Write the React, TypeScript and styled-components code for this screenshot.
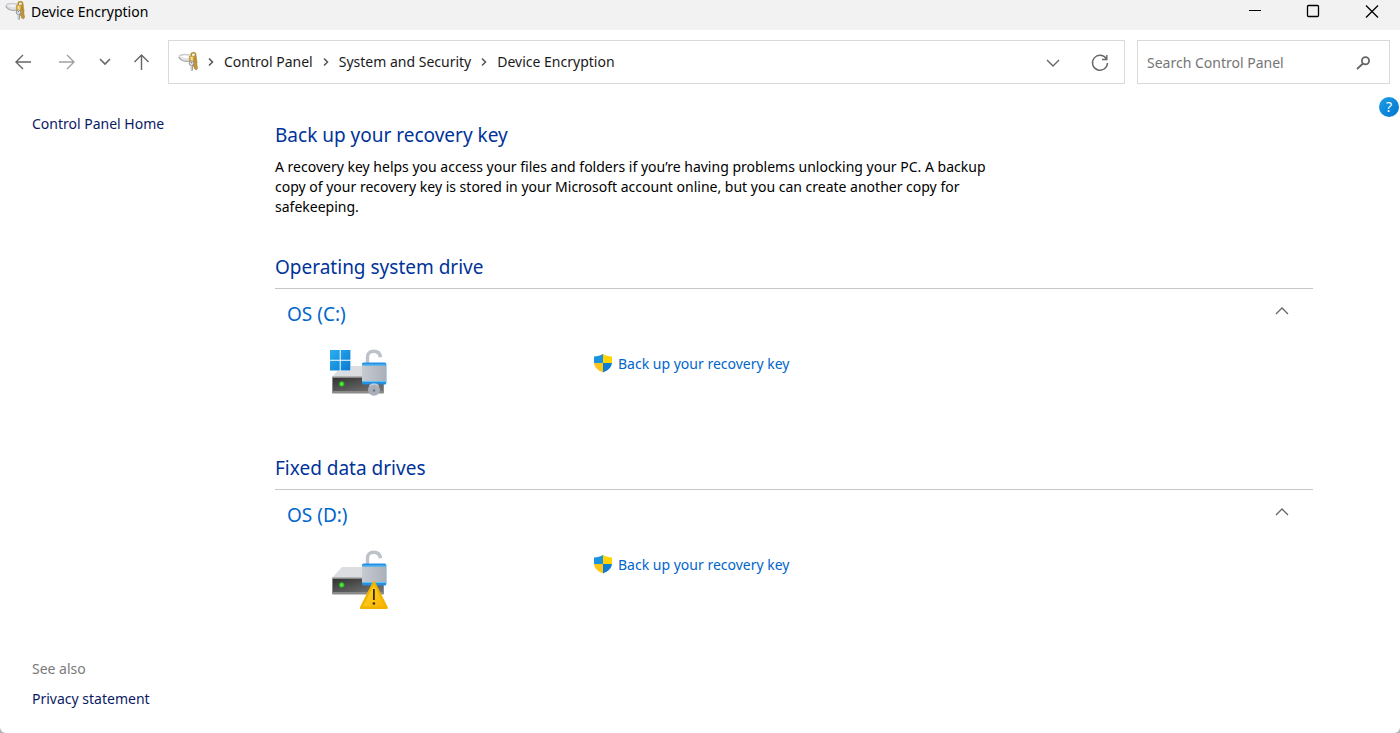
import React, { useState } from 'react';
import styled, { createGlobalStyle } from 'styled-components';

const GlobalStyle = createGlobalStyle`
  *, *::before, *::after { box-sizing: border-box; }
  body {
    margin: 0;
    background: #b4b4b4;
    font-family: 'Noto Sans', 'Open Sans', sans-serif;
    font-size: 14px;
    line-height: 20px;
    color: #000;
  }
  button { font: inherit; }
  a { text-decoration: none; }
  a:hover { text-decoration: underline; }
`;

const Window = styled.div`
  display: flex;
  flex-direction: column;
  min-height: 100vh;
  background: #fff;
  border-radius: 0 0 6px 6px;
`;

const TitleBar = styled.header`
  display: flex;
  align-items: flex-start;
  height: 30px;
  padding-left: 5px;
  background: #f2f2f2;
`;

const Title = styled.h1`
  flex: 1;
  margin: 0;
  padding: 2px 0 0 6px;
  font-size: 14px;
  font-weight: 400;
`;

const CaptionButton = styled.button`
  display: flex;
  align-items: center;
  justify-content: center;
  width: 58px;
  height: 22px;
  padding: 0;
  border: 0;
  background: none;
  color: #000;
`;

const NavBar = styled.nav`
  display: flex;
  align-items: center;
  gap: 12px;
  padding: 10px 10px 0 9px;
`;

const NavButtons = styled.div`
  display: flex;
  align-items: center;
  gap: 16px;
`;

const IconButton = styled.button<{ $width?: number; $muted?: boolean }>`
  display: flex;
  align-items: center;
  justify-content: center;
  flex: none;
  width: ${(p) => p.$width ?? 20}px;
  height: 20px;
  padding: 0;
  border: 0;
  background: none;
  color: ${(p) => (p.$muted ? '#a0a0a0' : '#666')};
`;

const AddressBar = styled.div`
  display: flex;
  align-items: center;
  flex: 1;
  height: 44px;
  margin-left: 3px;
  padding: 0 14px 0 9px;
  border: 1px solid #d9d9d9;
`;

const Crumbs = styled.ol`
  display: flex;
  align-items: center;
  flex: 1;
  margin: 0;
  padding: 0;
  list-style: none;
`;

const Crumb = styled.li`
  display: flex;
  align-items: center;
`;

const CrumbLink = styled.a`
  color: #1a1a1a;
`;

const CrumbArrow = styled.span`
  display: flex;
  justify-content: center;
  width: 26px;
  color: #555;
`;

const AddressActions = styled.div`
  display: flex;
  gap: 27px;
`;

const SearchBox = styled.form`
  display: flex;
  align-items: center;
  width: 253px;
  height: 44px;
  padding: 1px 16px 0 9px;
  border: 1px solid #d9d9d9;
`;

const SearchInput = styled.input`
  flex: 1;
  min-width: 0;
  padding: 0;
  border: 0;
  outline: 0;
  font: inherit;
  &::placeholder { color: #757575; opacity: 1; }
`;

const Body = styled.div`
  position: relative;
  display: flex;
  flex: 1;
`;

const Sidebar = styled.aside`
  display: flex;
  flex-direction: column;
  justify-content: space-between;
  flex: none;
  width: 275px;
  padding: 30px 32px 24px;
`;

const SideLink = styled.a`
  color: #0a1a66;
`;

const SeeAlso = styled.div`
  display: flex;
  flex-direction: column;
  gap: 10px;
`;

const SeeAlsoLabel = styled.span`
  color: #7a7a7a;
`;

const Content = styled.main`
  flex: 1;
  padding: 37px 87px 24px 0;
`;

const Heading = styled.h2`
  margin: 0;
  font-size: 19px;
  line-height: 28px;
  font-weight: 400;
  color: #003399;
`;

const Intro = styled.p`
  max-width: 724px;
  margin: 8px 0 36px;
`;

const Section = styled.section`
  min-height: 201px;
`;

const SectionHeading = styled(Heading)`
  padding-bottom: 7px;
  border-bottom: 1px solid #c6c6c6;
`;

const DriveHeader = styled.div`
  display: flex;
  align-items: center;
  justify-content: space-between;
  padding: 11px 21px 0 12px;
`;

const DriveName = styled.h3`
  margin: 0;
  font-size: 19px;
  line-height: 28px;
  font-weight: 400;
  color: #0066cc;
`;

const DriveBody = styled.div`
  display: flex;
  align-items: flex-start;
  gap: 201px;
  padding: 20px 0 0 53px;
`;

const BackupLink = styled.a`
  display: flex;
  align-items: center;
  gap: 5px;
  padding-top: 6px;
  color: #0066cc;
`;

const HelpButton = styled.button`
  position: absolute;
  top: 13px;
  right: 1px;
  width: 20px;
  height: 20px;
  padding: 0;
  border: 0;
  border-radius: 50%;
  background: linear-gradient(135deg, #1f9fe6, #0073cf);
  color: #fff;
  font-size: 14px;
  line-height: 20px;
`;

type IconProps = { children: React.ReactNode; size?: number; stroke?: number };

const LineIcon = ({ children, size = 20, stroke = 1.4 }: IconProps) => (
  <svg width={size} height={size} viewBox={`0 0 ${size} ${size}`} fill="none" stroke="currentColor" strokeWidth={stroke} aria-hidden="true">
    {children}
  </svg>
);

const KeyIcon = () => (
  <svg width="20" height="22" viewBox="1 0 20 22" fill="none" aria-hidden="true">
    <path d="M1.800 5.500C3.500 3.600 8 3 13 4" stroke="#c9ccd1" strokeWidth="1.600" />
    <path d="M2 6C4 8 8 8.800 12 8.200" stroke="#dfe1e4" strokeWidth="2.600" />
    <path d="M1.800 6C3.500 9.600 8 11 12.500 10" stroke="#a2a5ab" strokeWidth="1.200" />
    <path d="M14.200 5V3.800c0-2.600 4.400-2.600 4.400 0V6" stroke="#b58b2a" strokeWidth="1.500" />
    <path d="M12.300 5.400l6.800-.6 1 7-7.600 1.200z" fill="#dcb24e" stroke="#a57e24" strokeWidth=".6" />
    <path d="M14.500 6l.8 4.500" stroke="#f8e3a0" strokeWidth="1.500" />
    <path d="M18 5.500l1.600 6.500 1 5.500-1.400 1.500-1.700-1.300-.5-2-1-.7V11z" fill="#c4963a" stroke="#96701f" strokeWidth=".5" />
    <circle cx="14.500" cy="12.300" r="2.300" fill="#dcdee1" stroke="#85888e" strokeWidth=".8" />
    <circle cx="14.500" cy="11.700" r=".6" fill="#777b82" />
    <path d="M14.800 14.500v5" stroke="#85888e" strokeWidth="2" />
    <path d="M14.500 14.500v4.600" stroke="#dcdee1" strokeWidth=".8" />
  </svg>
);

const ShieldIcon = () => (
  <svg width="20" height="20" viewBox="0 0 20 20" aria-hidden="true">
    <defs>
      <clipPath id="shield">
        <path d="M10 0c2.500 1.600 5.400 2.400 9 2.500v5.500c0 5-3.500 8.300-9 10.500C4.500 16.300 1 13 1 8V2.500C4.600 2.400 7.500 1.600 10 0z" />
      </clipPath>
    </defs>
    <g clipPath="url(#shield)">
      <rect width="10" height="9" fill="#1c93e0" />
      <rect x="10" width="10" height="9" fill="#ffd400" />
      <rect y="9" width="10" height="11" fill="#ffc61a" />
      <rect x="10" y="9" width="10" height="11" fill="#0f7dd2" />
    </g>
  </svg>
);

const DriveIcon = ({ system }: { system: boolean }) => {
  const id = system ? 'c' : 'd';
  return (
    <svg width="64" height="64" viewBox="0 0 64 64" fill="none" aria-hidden="true">
      <defs>
        <linearGradient id={`front-${id}`} x1="0" y1="0" x2="1" y2="1">
          <stop offset="0" stopColor="#333" />
          <stop offset="1" stopColor="#777" />
        </linearGradient>
        <linearGradient id={`body-${id}`} x1="0" y1="0" x2="1" y2="0">
          <stop offset="0" stopColor="#c6cad1" />
          <stop offset="1" stopColor="#aab0ba" />
        </linearGradient>
        <linearGradient id={`logo-${id}`} x1="0" y1="0" x2="1" y2="1">
          <stop offset="0" stopColor="#2cb0f0" />
          <stop offset="1" stopColor="#0a78d0" />
        </linearGradient>
        <linearGradient id={`warn-${id}`} x1="0" y1="0" x2="1" y2="1">
          <stop offset="0" stopColor="#ffdc2e" />
          <stop offset="1" stopColor="#fbb000" />
        </linearGradient>
      </defs>
      <path d="M14 18h32l10 11H4z" fill="#dcdde0" />
      <rect x="4" y="28.500" width="52" height="17" rx="1" fill="#8b8b8b" />
      <rect x="5" y="30" width="50" height="13" fill={`url(#front-${id})`} />
      <circle cx="13.700" cy="36" r="3" fill="#2f8a2a" />
      <circle cx="13.700" cy="36" r="2" fill="#4be838" />
      {system && (
        <>
          <rect x="1" y="1" width="22" height="22" fill="#fff" />
          <path d="M2 2h9.700v9.700H2zM12.700 2h9.700v9.700h-9.700zM2 12.700h9.700v9.700H2zM12.700 12.700h9.700v9.700h-9.700z" fill={`url(#logo-${id})`} />
        </>
      )}
      <path d="M39.500 15V9C39.500 5.500 42 3.200 45.700 3.200s6.300 2.300 6.800 6" stroke="#bcc1ca" strokeWidth="3.400" />
      <rect x="34" y="14.500" width="24.300" height="22" rx="1.500" fill="#2590e2" />
      <rect x="34" y="17.500" width="24.300" height="15.500" fill={`url(#body-${id})`} />
      <path d="M34 17h24.300M34 33.500h24.300" stroke="#5fc2f7" strokeWidth="1.200" />
      {system ? (
        <>
          <circle cx="46" cy="41.700" r="6" fill="#a9aeb8" />
          <path d="M41.500 38a6 6 0 0 1 9 0" stroke="#c5c9d0" strokeWidth="1.500" />
          <circle cx="46" cy="42.500" r="1.300" fill="#757b86" />
        </>
      ) : (
        <>
          <path d="M45.900 33.200L58.700 58.800H33z" fill={`url(#warn-${id})`} stroke="#f0b400" strokeWidth="2.400" strokeLinejoin="round" />
          <path d="M45.900 40v11" stroke="#3a2c00" strokeWidth="1.800" />
          <circle cx="45.900" cy="54.500" r="1.300" fill="#3a2c00" />
        </>
      )}
    </svg>
  );
};

const DriveSection = ({ heading, name, system = false }: { heading: string; name: string; system?: boolean }) => {
  const [open, setOpen] = useState(true);
  return (
    <Section>
      <SectionHeading>{heading}</SectionHeading>
      <DriveHeader>
        <DriveName>{name}</DriveName>
        <IconButton aria-label={`Toggle ${name}`} aria-expanded={open} onClick={() => setOpen(!open)}>
          <LineIcon stroke={1.3}>
            <path d={open ? 'M4 10l6-6 6 6' : 'M4 4l6 6 6-6'} />
          </LineIcon>
        </IconButton>
      </DriveHeader>
      {open && (
        <DriveBody>
          <DriveIcon system={system} />
          <BackupLink href="#backup">
            <ShieldIcon />
            Back up your recovery key
          </BackupLink>
        </DriveBody>
      )}
    </Section>
  );
};

const CRUMBS = ['Control Panel', 'System and Security', 'Device Encryption'];

export default function App() {
  return (
    <>
      <GlobalStyle />
      <Window>
        <TitleBar>
          <KeyIcon />
          <Title>Device Encryption</Title>
          <CaptionButton aria-label="Minimize">
            <LineIcon stroke={1}><path d="M4 9.500h12" /></LineIcon>
          </CaptionButton>
          <CaptionButton aria-label="Maximize">
            <LineIcon stroke={1.3}><rect x="4.500" y="4.500" width="11" height="11" rx="1" /></LineIcon>
          </CaptionButton>
          <CaptionButton aria-label="Close">
            <LineIcon stroke={1.3}><path d="M5 4.500l12 12M17 4.500l-12 12" /></LineIcon>
          </CaptionButton>
        </TitleBar>

        <NavBar aria-label="Navigation">
          <NavButtons>
            <IconButton aria-label="Back" $width={28}>
              <LineIcon><path d="M18 10H3M10 3L3 10l7 7" /></LineIcon>
            </IconButton>
            <IconButton aria-label="Forward" $width={28} $muted>
              <LineIcon><path d="M2 10h15M10 3l7 7-7 7" /></LineIcon>
            </IconButton>
            <IconButton aria-label="Recent locations" $width={16}>
              <LineIcon size={16} stroke={1.6}><path d="M3 5l5 5 5-5" /></LineIcon>
            </IconButton>
            <IconButton aria-label="Up" $width={24}>
              <LineIcon><path d="M10.500 18V3M3.500 10l7-7 7 7" /></LineIcon>
            </IconButton>
          </NavButtons>
          <AddressBar>
            <KeyIcon />
            <Crumbs>
              {CRUMBS.map((crumb) => (
                <Crumb key={crumb}>
                  <CrumbArrow>
                    <LineIcon size={10} stroke={1.5}><path d="M3 1.500L6.500 5 3 8.500" /></LineIcon>
                  </CrumbArrow>
                  <CrumbLink href="#crumb">{crumb}</CrumbLink>
                </Crumb>
              ))}
            </Crumbs>
            <AddressActions>
              <IconButton aria-label="Show history">
                <LineIcon><path d="M4 8l6 6 6-6" /></LineIcon>
              </IconButton>
              <IconButton aria-label="Refresh">
                <LineIcon><path d="M16.500 7A7.500 7.500 0 1 0 17.500 11M16.800 3v4.500H12" /></LineIcon>
              </IconButton>
            </AddressActions>
          </AddressBar>
          <SearchBox role="search" onSubmit={(e) => e.preventDefault()}>
            <SearchInput aria-label="Search Control Panel" placeholder="Search Control Panel" />
            <IconButton aria-label="Search" type="submit">
              <LineIcon stroke={1.8}><circle cx="12.500" cy="7.800" r="3.600" /><path d="M10 10.500L4 16" /></LineIcon>
            </IconButton>
          </SearchBox>
        </NavBar>

        <Body>
          <HelpButton aria-label="Help">?</HelpButton>
          <Sidebar>
            <SideLink href="#home">Control Panel Home</SideLink>
            <SeeAlso>
              <SeeAlsoLabel>See also</SeeAlsoLabel>
              <SideLink href="#privacy">Privacy statement</SideLink>
            </SeeAlso>
          </Sidebar>
          <Content>
            <Heading>Back up your recovery key</Heading>
            <Intro>
              A recovery key helps you access your files and folders if you’re having problems unlocking your PC. A backup
              copy of your recovery key is stored in your Microsoft account online, but you can create another copy for
              safekeeping.
            </Intro>
            <DriveSection heading="Operating system drive" name="OS (C:)" system />
            <DriveSection heading="Fixed data drives" name="OS (D:)" />
          </Content>
        </Body>
      </Window>
    </>
  );
}
